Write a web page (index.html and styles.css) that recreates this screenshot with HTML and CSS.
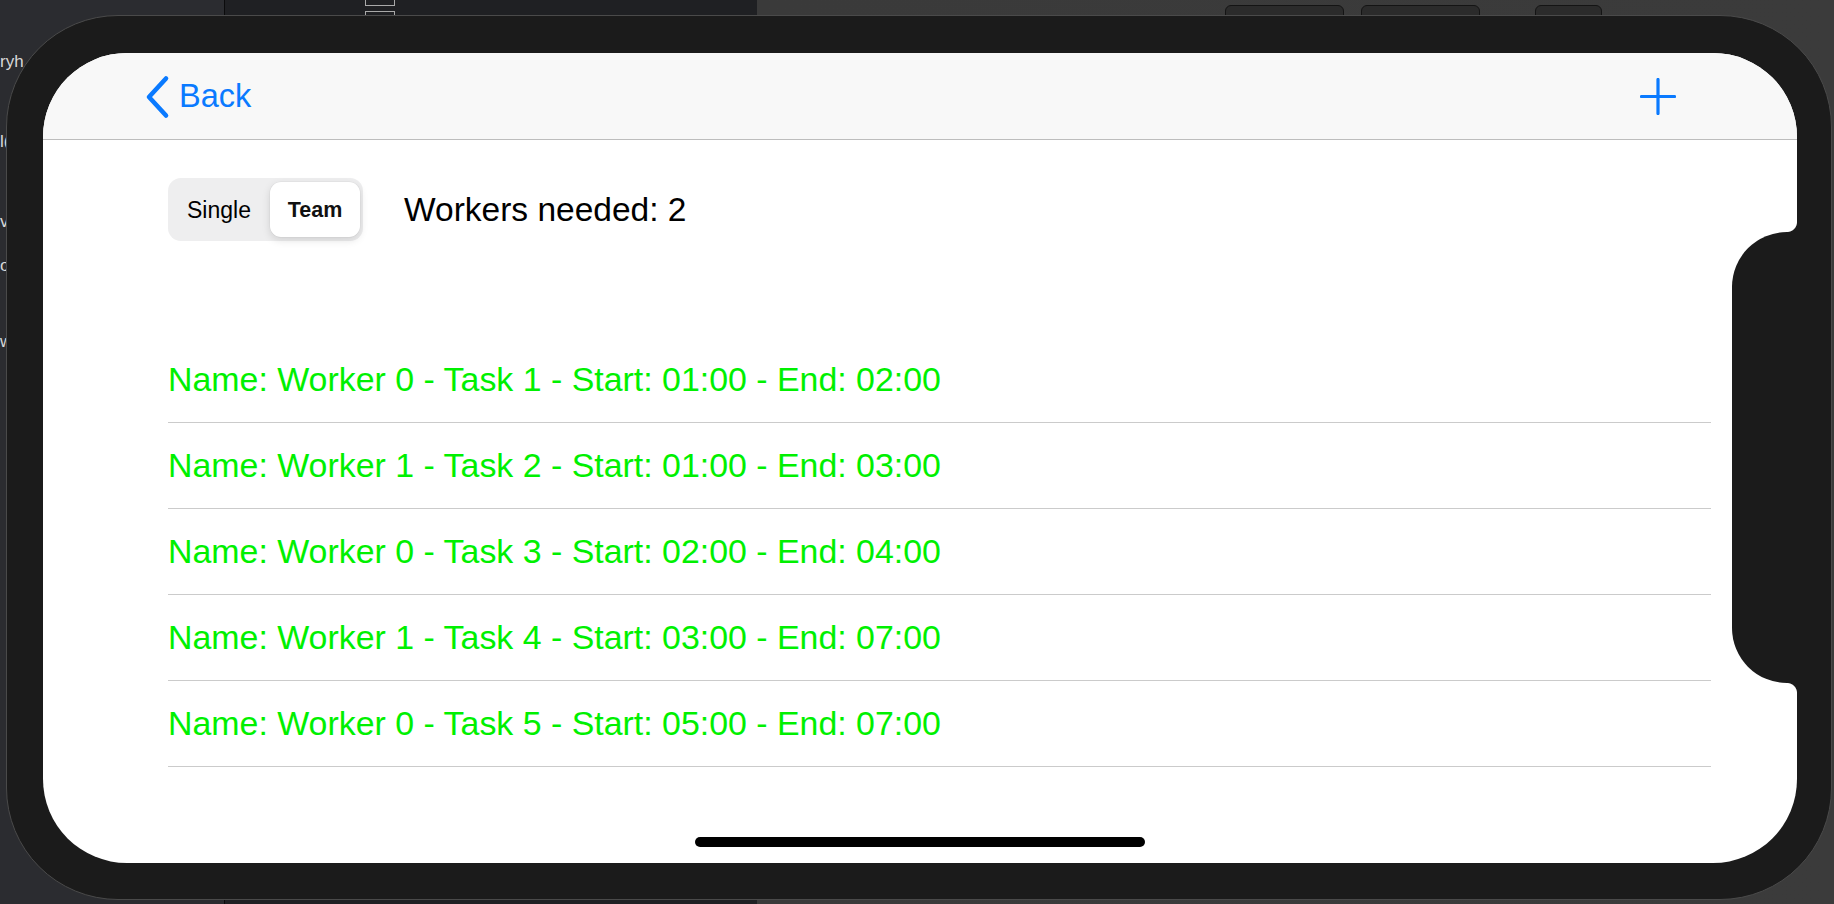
FILE: index.html
```html
<!DOCTYPE html>
<html lang="en">
<head>
<meta charset="utf-8">
<title>Workers</title>
<link rel="stylesheet" href="styles.css">
</head>
<body>
<div class="desktop">
  <div class="top-boxes">
    <span class="tbox"></span>
    <span class="tbox"></span>
  </div>
  <div class="sidebar">
    <span class="frag f1">ryh</span>
    <span class="frag f2">l(</span>
    <span class="frag f3">v</span>
    <span class="frag f4">o</span>
    <span class="frag f5">w</span>
  </div>
  <div class="hw-btn hw1"></div>
  <div class="hw-btn hw2"></div>
  <div class="hw-btn hw3"></div>

  <div class="device">
    <div class="screen">
      <header class="nav">
        <a class="back">
          <svg class="chev" width="26" height="44" viewBox="0 0 26 44">
            <path d="M22 3.5 L5 22 L22 40.5" fill="none" stroke="#0a7aff" stroke-width="4.6" stroke-linecap="round" stroke-linejoin="round"/>
          </svg>
          <span class="back-label">Back</span>
        </a>
        <svg class="plus" width="36" height="37" viewBox="0 0 36 37">
          <path d="M18 1.5 V35.5 M1.5 18.5 H34.5" fill="none" stroke="#0a7aff" stroke-width="3.2" stroke-linecap="round"/>
        </svg>
      </header>
      <main class="content">
        <div class="toolbar">
          <div class="segmented">
            <span class="seg seg-off">Single</span>
            <span class="seg seg-on">Team</span>
          </div>
          <span class="workers">Workers needed: 2</span>
        </div>
        <ul class="list">
          <li class="row">Name: Worker 0 - Task 1 - Start: 01:00 - End: 02:00</li>
          <li class="row">Name: Worker 1 - Task 2 - Start: 01:00 - End: 03:00</li>
          <li class="row">Name: Worker 0 - Task 3 - Start: 02:00 - End: 04:00</li>
          <li class="row">Name: Worker 1 - Task 4 - Start: 03:00 - End: 07:00</li>
          <li class="row">Name: Worker 0 - Task 5 - Start: 05:00 - End: 07:00</li>
        </ul>
      </main>
      <div class="notch"></div>
      <div class="home-indicator"></div>
    </div>
  </div>
</div>
</body>
</html>
```
FILE: styles.css
```css
* { box-sizing: border-box; }

html, body {
  margin: 0;
  padding: 0;
}

body {
  width: 1834px;
  height: 904px;
  overflow: hidden;
  font-family: "Liberation Sans", Arial, sans-serif;
  background: linear-gradient(to right, #2b2c30 0, #2b2c30 224px, #0b0b0c 224px, #0b0b0c 225px, #1f2023 225px, #1f2023 757px, #3a3a3a 757px, #3b3b3b 100%);
}

.desktop {
  position: relative;
  width: 1834px;
  height: 904px;
}

.top-boxes {
  position: absolute;
  left: 365px;
  top: 0;
  display: flex;
  flex-direction: column;
  gap: 5px;
}

.tbox {
  display: block;
  width: 30px;
  height: 6px;
  border: 1px solid #a9a9a9;
  border-top: none;
}
.tbox + .tbox { border-top: 1px solid #a9a9a9; border-bottom: none; height: 8px; }

.sidebar {
  position: absolute;
  left: 0;
  top: 0;
  width: 40px;
  display: flex;
  flex-direction: column;
  color: #d8d8d8;
  font-size: 17px;
  line-height: 20px;
}

.frag { display: block; white-space: nowrap; }
.f1 { margin-top: 52px; }
.f2 { margin-top: 60px; }
.f3 { margin-top: 60px; }
.f4 { margin-top: 24px; }
.f5 { margin-top: 56px; }

.hw-btn {
  position: absolute;
  top: 5px;
  height: 14px;
  background: #2b2b2b;
  border: 1px solid #141414;
  border-radius: 6px 6px 0 0;
}
.hw1 { left: 1225px; width: 119px; }
.hw2 { left: 1361px; width: 119px; }
.hw3 { left: 1535px; width: 67px; }

.device {
  position: absolute;
  left: 6px;
  top: 15px;
  width: 1826px;
  height: 885px;
  background: #1b1b1b;
  border: 1px solid #4a4a4a;
  border-radius: 112px;
  padding: 37px 34px 36px 36px;
}

.screen {
  position: relative;
  width: 1754px;
  height: 810px;
  background: #ffffff;
  border-radius: 84px;
  overflow: hidden;
  display: flex;
  flex-direction: column;
}

.nav {
  flex: 0 0 87px;
  height: 87px;
  background: #f8f8f8;
  border-bottom: 1px solid #bdbdbd;
  display: flex;
  align-items: center;
  justify-content: space-between;
  padding: 0 121px 0 101px;
}

.back {
  display: flex;
  align-items: center;
  gap: 9px;
  color: #0a7aff;
}

.chev { display: block; margin-top: 1px; }

.back-label {
  font-size: 32.5px;
  line-height: 38px;
  color: #0a7aff;
}

.plus { display: block; margin-top: 1px; }

.content {
  padding: 38px 86px 0 125px;
}

.toolbar {
  display: flex;
  align-items: center;
}

.segmented {
  display: flex;
  align-items: stretch;
  width: 195px;
  height: 63px;
  padding: 4px 3px 4px 4px;
  background: #eeeeef;
  border-radius: 13px;
}

.seg {
  display: flex;
  align-items: center;
  justify-content: center;
  font-size: 23px;
  color: #000;
  padding-top: 2px;
}

.seg-off {
  width: 98px;
  padding-right: 4px;
}

.seg-on {
  width: 90px;
  background: #ffffff;
  border-radius: 11px;
  font-weight: 700;
  font-size: 21.5px;
  color: #111;
  box-shadow: 0 3px 8px rgba(0, 0, 0, 0.13), 0 0 0 0.5px rgba(0, 0, 0, 0.05);
}

.workers {
  margin-left: 41px;
  font-size: 33.5px;
  color: #000;
  margin-top: 1px;
}

.list {
  list-style: none;
  margin: 96px 0 0 0;
  padding: 0;
}

.row {
  height: 86px;
  border-bottom: 1px solid #cbcbcb;
  display: flex;
  align-items: center;
  font-size: 33.9px;
  color: #00f000;
  white-space: nowrap;
}

.notch {
  position: absolute;
  right: 0;
  top: 179px;
  width: 65px;
  height: 451px;
  background: #1b1b1b;
  border-radius: 55px 0 0 55px;
}

.notch::before,
.notch::after {
  content: "";
  position: absolute;
  right: 0;
  width: 10px;
  height: 10px;
}

.notch::before {
  top: -10px;
  background: radial-gradient(circle at 0 0, transparent 9.5px, #1b1b1b 10.5px);
}

.notch::after {
  bottom: -10px;
  background: radial-gradient(circle at 0 100%, transparent 9.5px, #1b1b1b 10.5px);
}

.home-indicator {
  position: absolute;
  left: 50%;
  bottom: 16px;
  width: 450px;
  height: 10px;
  margin-left: -225px;
  background: #000;
  border-radius: 5px;
}
```
